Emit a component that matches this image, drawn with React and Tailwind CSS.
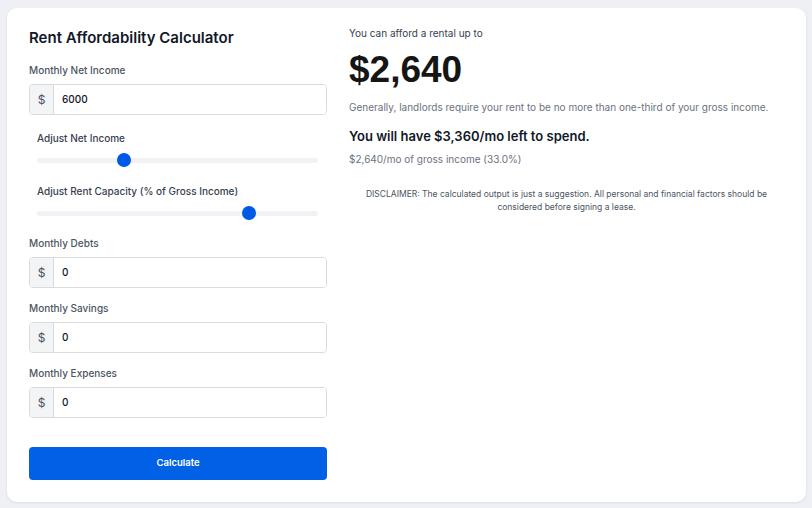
import React, { useState } from 'react'

const MoneyField = ({ label, value, onChange }) => (
  <div className="flex flex-col">
    <label className="text-[10px] leading-4 font-medium text-[#4b5563] mb-[6px]">{label}</label>
    <div className="flex h-[31px] rounded-[4px] border border-[#d9dbe0] overflow-hidden bg-white">
      <span className="w-[24px] flex items-center justify-center bg-[#f3f4f6] border-r border-[#d9dbe0] text-[12px] text-[#4b5563]">$</span>
      <input
        className="flex-1 px-[8px] text-[10px] font-medium text-[#111827] outline-none bg-white"
        value={value}
        onChange={(e) => onChange(e.target.value)}
      />
    </div>
  </div>
)

const Slider = ({ label, pct }) => (
  <div className="flex flex-col">
    <span className="text-[10px] leading-4 font-medium text-[#374151]">{label}</span>
    <div className="relative h-[14px] mt-[7px] flex items-center">
      <div className="w-full h-[5px] rounded-full bg-[#f1f2f5]"></div>
      <div
        className="absolute top-0 w-[14px] h-[14px] rounded-full bg-[#0058e6] -ml-[7px]"
        style={{ left: pct + '%' }}
      ></div>
    </div>
  </div>
)

const App = () => {
  const [income, setIncome] = useState('6000')
  const [debts, setDebts] = useState('0')
  const [savings, setSavings] = useState('0')
  const [expenses, setExpenses] = useState('0')

  return (
    <div className="min-h-screen bg-[#eff0f5] pt-[8px] pl-[7px]" style={{ fontFamily: 'Inter, "Noto Sans", sans-serif' }}>
      <div className="w-[799px] h-[494px] bg-white rounded-[10px] shadow-[0_1px_3px_rgba(0,0,0,0.08)] flex gap-[22px] px-[22px]">
        {/* left: form */}
        <div className="w-[298px] flex flex-col pt-[18px]">
          <h1 className="text-[15px] leading-6 font-semibold text-[#111827]">Rent Affordability Calculator</h1>
          <div className="mt-[12px]">
            <MoneyField label="Monthly Net Income" value={income} onChange={setIncome} />
          </div>
          <div className="flex flex-col gap-[16px] mt-[15px] pl-[8px] pr-[9px]">
            <Slider label="Adjust Net Income" pct={31} />
            <Slider label="Adjust Rent Capacity (% of Gross Income)" pct={75.4} />
          </div>
          <div className="flex flex-col gap-[12px] mt-[15px]">
            <MoneyField label="Monthly Debts" value={debts} onChange={setDebts} />
            <MoneyField label="Monthly Savings" value={savings} onChange={setSavings} />
            <MoneyField label="Monthly Expenses" value={expenses} onChange={setExpenses} />
          </div>
          <button type="button" className="mt-[29px] h-[33px] rounded-[4px] bg-[#0060e6] text-white text-[9.5px] font-semibold">Calculate</button>
        </div>

        {/* right: result */}
        <div className="flex-1 flex flex-col pt-[17px]">
          <p className="text-[10px] leading-4 text-[#374151]">You can afford a rental up to</p>
          <p className="mt-[9px] text-[37px] leading-10 font-bold text-[#151515]" style={{ fontFamily: '"Liberation Sans", Arial, sans-serif' }}>$2,640</p>
          <p className="mt-[9px] text-[10px] leading-4 text-[#6b7280]">Generally, landlords require your rent to be no more than one-third of your gross income.</p>
          <p className="mt-[11px] text-[13px] leading-5 font-semibold text-[#111827]">You will have $3,360/mo left to spend.</p>
          <p className="mt-[5px] text-[10px] leading-4 text-[#6b7280]">$2,640/mo of gross income (33.0%)</p>
          <p className="mt-[21px] text-[8.5px] leading-[13px] text-[#4b5563] text-center px-[16px]">
            DISCLAIMER: The calculated output is just a suggestion. All personal and financial factors should be considered before signing a lease.
          </p>
        </div>
      </div>
    </div>
  )
}

export default App
